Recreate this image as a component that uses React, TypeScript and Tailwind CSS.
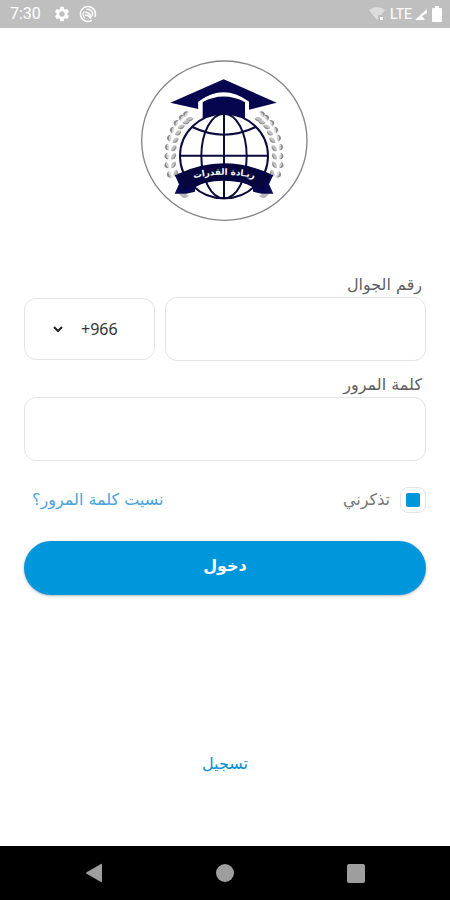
import React, { useState } from 'react';

const leaves = [
  { x: 158, y: 184, r: 50 },
  { x: 146, y: 194, r: 42 },
  { x: 131, y: 209, r: 34 },
  { x: 120, y: 229, r: 26 },
  { x: 112, y: 252, r: 18 },
  { x: 106, y: 278, r: 8 },
  { x: 105, y: 304, r: 0 },
  { x: 105, y: 330, r: -6 },
  { x: 112, y: 357, r: -16 },
];

const Branch: React.FC = () => (
  <g>
    {leaves.map((l) => (
      <g key={l.y} transform={`translate(${l.x} ${l.y}) rotate(${l.r})`}>
        <path d="M-8-11C-20-7-20 9-4 9C-10 2-12-3-8-11Z" fill="#8c8c8c" />
        <path d="M-8-10C-3-5-3 3-4 9C-11 3-12-3-8-10Z" fill="#d6d6d6" />
        <path d="M3 9C2-2 9-10 16-9C20-1 14 9 3 9Z" fill="#c0c0c0" />
        <path d="M3 9C9 8 14 4 16-9C21 0 15 12 3 9Z" fill="#8f8f8f" />
      </g>
    ))}
    <path d="M132 416Q148 408 162 424Q146 438 132 416Z" fill="#b9b9b9" />
  </g>
);

const Logo: React.FC = () => (
  <svg viewBox="0 0 540 510" className="w-[180px] h-[170px]" role="img" aria-label="ريادة القدرات">
    <ellipse cx="268" cy="257" rx="248" ry="239" fill="#fff" stroke="#858585" strokeWidth="4" />
    <Branch />
    <g transform="translate(534 0) scale(-1 1)">
      <Branch />
    </g>

    {/* Globe */}
    <g fill="none" stroke="#0a0a3c" strokeWidth="6">
      <ellipse cx="267" cy="303" rx="132" ry="127" />
      <ellipse cx="267" cy="303" rx="68" ry="127" />
      <path d="M267 176V430M135 302H399" />
      <path d="M172 216Q267 262 362 216M172 398Q267 340 362 398" />
    </g>

    {/* Graduation cap */}
    <path d="M266 73L425 143L342 164V150Q266 82 190 142V162L106 143Z" fill="#06064f" />
    <path d="M203 141Q266 108 330 141V190Q266 164 203 190Z" fill="#06064f" />
    <path d="M194 160V142Q266 90 338 142V160" fill="none" stroke="#fff" strokeWidth="8" />

    {/* Ribbon */}
    <path d="M119 359L180 364V410L154 416L119 416L132 388Z" fill="#080850" />
    <path d="M415 359L354 364V410L380 416L415 416L402 388Z" fill="#080850" />
    <path d="M126 358Q267 292 408 358L384 404Q267 350 150 404Z" fill="#05053f" />
    <path id="ribbon-line" d="M156 375Q267 343 378 375" fill="none" />
    <text
      fill="#fff"
      fontSize="26"
      fontWeight="700"
      textAnchor="middle"
      direction="rtl"
      fontFamily="'DejaVu Sans', sans-serif"
    >
      <textPath href="#ribbon-line" startOffset="50%">ريـادة القدرات</textPath>
    </text>
  </svg>
);

const StatusBar: React.FC = () => (
  <header dir="ltr" className="flex h-7 items-center justify-between bg-[#bfbfbf] pl-[10px] pr-2 text-white">
    <div className="flex items-center">
      <span className="font-['Roboto',sans-serif] text-base">7:30</span>
      <svg viewBox="0 0 24 24" className="ml-3 h-[18px] w-[18px]" fill="currentColor" aria-hidden="true">
        <path d="M19.14 12.94c.04-.3.06-.61.06-.94s-.02-.64-.07-.94l2.03-1.58a.49.49 0 0 0 .12-.61l-1.92-3.32a.49.49 0 0 0-.59-.22l-2.39.96a7 7 0 0 0-1.62-.94l-.36-2.54a.48.48 0 0 0-.48-.41h-3.84a.48.48 0 0 0-.47.41l-.36 2.54c-.59.24-1.13.57-1.62.94l-2.39-.96a.48.48 0 0 0-.59.22L2.74 8.87a.48.48 0 0 0 .12.61l2.03 1.58a6 6 0 0 0 0 1.88l-2.03 1.58a.49.49 0 0 0-.12.61l1.92 3.32c.12.22.37.29.59.22l2.39-.96c.5.38 1.03.7 1.62.94l.36 2.54c.05.24.24.41.48.41h3.84c.24 0 .44-.17.47-.41l.36-2.54a7 7 0 0 0 1.62-.94l2.39.96c.22.08.47 0 .59-.22l1.92-3.32a.48.48 0 0 0-.12-.61zM12 15.6a3.6 3.6 0 1 1 0-7.2 3.6 3.6 0 0 1 0 7.2z" />
      </svg>
      <svg viewBox="0 0 24 24" className="ml-2 h-[18px] w-[18px]" fill="none" stroke="currentColor" strokeWidth="2" aria-hidden="true">
        <path d="M17 20.5A10 10 0 1 1 21 16" />
        <path d="M8 17.5A6.5 6.5 0 0 1 7 8.5M10 6A6.5 6.5 0 0 1 18 14" />
        <path d="M8 9.5L13 11L17 16M8 13.5L12 14L16 18" />
      </svg>
    </div>
    <div className="flex items-center">
      <svg viewBox="0 0 18 18" className="h-[18px] w-[18px]" aria-hidden="true">
        <path d="M1 5Q9-1 17 5L13 10H10V14L9 15Z" fill="#dcdcdc" />
        <path d="M12 12H15V15H12Z" fill="#fff" />
      </svg>
      <span className="ml-1 font-['Roboto',sans-serif] text-sm">LTE</span>
      <svg viewBox="0 0 14 14" className="ml-[2px] h-[14px] w-[14px]" aria-hidden="true">
        <path d="M13 2V6L8 9L11 13H1Z" fill="#fff" />
      </svg>
      <svg viewBox="0 0 10 16" className="ml-1 h-4 w-[10px]" fill="#fff" aria-hidden="true">
        <path d="M3 0H7V2H9Q10 2 10 3V15Q10 16 9 16H1Q0 16 0 15V3Q0 2 1 2H3Z" />
      </svg>
    </div>
  </header>
);

const NavBar: React.FC = () => (
  <nav dir="ltr" className="flex h-[54px] items-center justify-between bg-black px-[84px]">
    <button type="button" aria-label="رجوع">
      <svg viewBox="0 0 20 20" className="h-5 w-5" fill="#9e9e9e">
        <path d="M3 9L17 1Q18 0 18 2V18Q18 20 17 19L3 11Q1 10 3 9Z" />
      </svg>
    </button>
    <button type="button" aria-label="الرئيسية">
      <svg viewBox="0 0 20 20" className="h-5 w-5" fill="#9e9e9e">
        <circle cx="10" cy="10" r="9" />
      </svg>
    </button>
    <button type="button" aria-label="التطبيقات الأخيرة">
      <svg viewBox="0 0 20 20" className="h-5 w-5" fill="#9e9e9e">
        <rect x="1" y="1" width="18" height="19" rx="2" />
      </svg>
    </button>
  </nav>
);

export default function App() {
  const [phone, setPhone] = useState('');
  const [password, setPassword] = useState('');
  const [remember, setRemember] = useState(true);

  return (
    <div dir="rtl" lang="ar" className="flex min-h-screen flex-col bg-white font-['DejaVu_Sans',sans-serif]">
      <StatusBar />

      <main className="flex flex-1 flex-col px-6 pt-[27px]">
        <div className="flex justify-center">
          <Logo />
        </div>

        <form className="mt-12 flex flex-col" onSubmit={(e) => e.preventDefault()}>
          <label htmlFor="phone" className="px-1 text-base leading-6 text-[#5f5f5f]">رقم الجوال</label>
          <div className="grid grid-cols-[2fr_1fr] items-center gap-[10px]">
            <input
              id="phone"
              type="tel"
              value={phone}
              onChange={(e) => setPhone(e.target.value)}
              className="h-16 w-full min-w-0 rounded-xl border border-[#e4e4e4] px-4 outline-none"
            />
            <div dir="ltr" className="relative min-w-0">
              <select
                aria-label="رمز الدولة"
                className="h-[62px] w-full appearance-none rounded-xl border border-[#e4e4e4] bg-white pl-14 font-['Noto_Sans',sans-serif] text-base text-[#333] outline-none"
              >
                <option>+966</option>
              </select>
              <svg viewBox="0 0 12 12" className="pointer-events-none absolute left-7 top-6 h-3 w-3" fill="none" stroke="#222" strokeWidth="2" aria-hidden="true">
                <path d="M2 5L6 9L10 5" />
              </svg>
            </div>
          </div>

          <label htmlFor="password" className="mt-3 px-1 text-base leading-6 text-[#5f5f5f]">كلمة المرور</label>
          <input
            id="password"
            type="password"
            value={password}
            onChange={(e) => setPassword(e.target.value)}
            className="h-16 rounded-xl border border-[#e4e4e4] px-4 outline-none"
          />

          <div className="mt-[26px] flex items-center justify-between">
            <label className="flex items-center gap-[10px] text-base leading-6 text-[#757575]">
              <input
                type="checkbox"
                checked={remember}
                onChange={(e) => setRemember(e.target.checked)}
                className="h-[26px] w-[26px] appearance-none rounded-lg border border-[#e4e4e4] bg-white bg-clip-content p-[5px] checked:bg-[#0096dc]"
              />
              تذكرني
            </label>
            <a href="#forgot" className="px-2 text-base leading-6 text-[#4aa3dc]">نسيت كلمة المرور؟</a>
          </div>

          <button type="submit" className="mt-7 h-[54px] rounded-full bg-[#0096dc] pb-1 text-base font-bold text-white shadow-[0_1px_3px_rgba(0,0,0,0.3)]">
            دخول
          </button>
        </form>

        <a href="#register" className="mb-[70px] mt-auto self-center text-base leading-6 text-[#0a90d4]">تسجيل</a>
      </main>

      <NavBar />
    </div>
  );
}
